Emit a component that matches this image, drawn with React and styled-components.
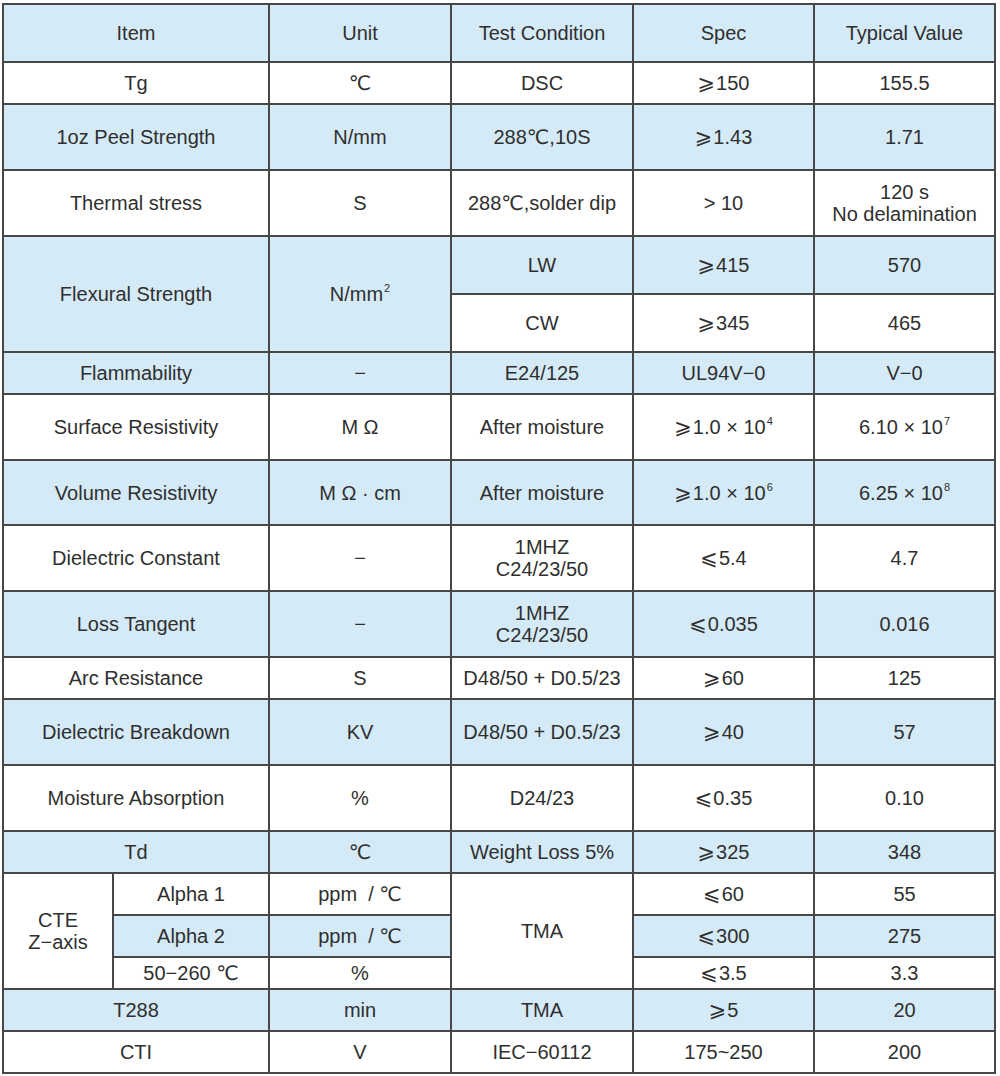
import React from 'react'
import styled, { createGlobalStyle } from 'styled-components'

const GlobalStyle = createGlobalStyle`
  html, body {
    margin: 0;
    padding: 0;
    background: #fff;
  }
  body {
    font-family: "Liberation Sans", "DejaVu Sans", Arial, sans-serif;
    color: #2f2f2f;
  }
`

const Page = styled.div`
  padding: 3px 6px 4px 2px;
`

const SpecTable = styled.table`
  width: 992px;
  border-collapse: collapse;
  table-layout: fixed;
  font-size: 20px;
  line-height: 22px;
`

const Row = styled.tr`
  height: ${(p) => p.$h}px;
`

const Cell = styled.td`
  border: 2px solid #474747;
  padding: 0 4px;
  text-align: center;
  vertical-align: middle;
  background: ${(p) => (p.$blue ? '#d5eaf7' : '#fff')};
  font-weight: 400;
`

const Sup = styled.sup`
  font-size: 11px;
  line-height: 0;
  vertical-align: 9px;
  margin-left: 1px;
`

const Symbol = styled.span`
  font-family: "DejaVu Sans", sans-serif;
  font-size: 21px;
  margin-right: 1px;
`

const GE = () => <Symbol>⩾</Symbol>
const LE = () => <Symbol>⩽</Symbol>
const DEG = '℃'

function SpecRow({ h, blue, cells }) {
  return (
    <Row $h={h}>
      {cells.map((c, i) => (
        <Cell key={i} $blue={blue} colSpan={i === 0 ? 2 : 1}>
          {c}
        </Cell>
      ))}
    </Row>
  )
}

export default function App() {
  return (
    <Page>
      <GlobalStyle />
      <SpecTable>
        <colgroup>
          <col style={{ width: 110 }} />
          <col style={{ width: 156 }} />
          <col style={{ width: 182 }} />
          <col style={{ width: 182 }} />
          <col style={{ width: 181 }} />
          <col style={{ width: 181 }} />
        </colgroup>
        <tbody>
          <SpecRow h={58} blue cells={['Item', 'Unit', 'Test Condition', 'Spec', 'Typical Value']} />
          <SpecRow h={42} cells={['Tg', DEG, 'DSC', <><GE />150</>, '155.5']} />
          <SpecRow h={66} blue cells={['1oz Peel Strength', 'N/mm', `288${DEG},10S`, <><GE />1.43</>, '1.71']} />
          <SpecRow
            h={66}
            cells={['Thermal stress', 'S', `288${DEG},solder dip`, '> 10', <>120 s<br />No delamination</>]}
          />

          <Row $h={58}>
            <Cell $blue colSpan={2} rowSpan={2}>Flexural Strength</Cell>
            <Cell $blue rowSpan={2}>N/mm<Sup>2</Sup></Cell>
            <Cell $blue>LW</Cell>
            <Cell $blue><GE />415</Cell>
            <Cell $blue>570</Cell>
          </Row>
          <Row $h={58}>
            <Cell>CW</Cell>
            <Cell><GE />345</Cell>
            <Cell>465</Cell>
          </Row>

          <SpecRow h={42} blue cells={['Flammability', '−', 'E24/125', 'UL94V−0', 'V−0']} />
          <SpecRow
            h={66}
            cells={[
              'Surface Resistivity',
              'M Ω',
              'After moisture',
              <><GE />1.0 × 10<Sup>4</Sup></>,
              <>6.10 × 10<Sup>7</Sup></>,
            ]}
          />
          <SpecRow
            h={65}
            blue
            cells={[
              'Volume Resistivity',
              'M Ω  · cm',
              'After moisture',
              <><GE />1.0 × 10<Sup>6</Sup></>,
              <>6.25 × 10<Sup>8</Sup></>,
            ]}
          />
          <SpecRow h={66} cells={['Dielectric Constant', '−', <>1MHZ<br />C24/23/50</>, <><LE />5.4</>, '4.7']} />
          <SpecRow h={66} blue cells={['Loss Tangent', '−', <>1MHZ<br />C24/23/50</>, <><LE />0.035</>, '0.016']} />
          <SpecRow h={42} cells={['Arc Resistance', 'S', 'D48/50 + D0.5/23', <><GE />60</>, '125']} />
          <SpecRow h={66} blue cells={['Dielectric Breakdown', 'KV', 'D48/50 + D0.5/23', <><GE />40</>, '57']} />
          <SpecRow h={66} cells={['Moisture Absorption', '%', 'D24/23', <><LE />0.35</>, '0.10']} />
          <SpecRow h={42} blue cells={['Td', DEG, 'Weight Loss 5%', <><GE />325</>, '348']} />

          <Row $h={42}>
            <Cell rowSpan={3}>CTE<br />Z−axis</Cell>
            <Cell>Alpha 1</Cell>
            <Cell>ppm&nbsp; /&nbsp;{DEG}</Cell>
            <Cell rowSpan={3}>TMA</Cell>
            <Cell><LE />60</Cell>
            <Cell>55</Cell>
          </Row>
          <Row $h={42}>
            <Cell $blue>Alpha 2</Cell>
            <Cell $blue>ppm&nbsp; /&nbsp;{DEG}</Cell>
            <Cell $blue><LE />300</Cell>
            <Cell $blue>275</Cell>
          </Row>
          <Row $h={32}>
            <Cell>50−260 {DEG}</Cell>
            <Cell>%</Cell>
            <Cell><LE />3.5</Cell>
            <Cell>3.3</Cell>
          </Row>

          <SpecRow h={42} blue cells={['T288', 'min', 'TMA', <><GE />5</>, '20']} />
          <SpecRow h={42} cells={['CTI', 'V', 'IEC−60112', '175~250', '200']} />
        </tbody>
      </SpecTable>
    </Page>
  )
}
